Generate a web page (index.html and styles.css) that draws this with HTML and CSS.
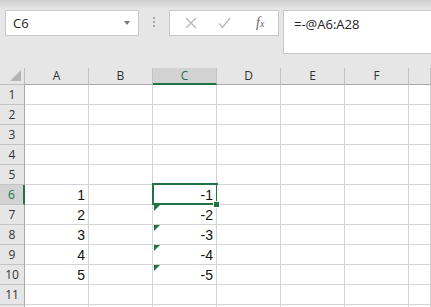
FILE: index.html
```html
<!DOCTYPE html>
<html lang="en">
<head>
    <meta charset="UTF-8">
    <title>Sheet</title>
    <link rel="stylesheet" href="styles.css">
</head>
<body>
    <div class="toolbar">
        <div class="name-box">
            <span>C6</span>
            <span class="arrow"></span>
        </div>
        <div class="dots"><i></i><i></i><i></i></div>
        <div class="buttons">
            <svg class="ico" width="12" height="12" viewBox="0 0 12 12"><path d="M1 1 L11 11 M11 1 L1 11" stroke="#b9b9b9" stroke-width="1.3" fill="none"/></svg>
            <svg class="ico" width="13" height="12" viewBox="0 0 13 12"><path d="M1 6.5 L4.5 10.5 L12 1" stroke="#b9b9b9" stroke-width="1.4" fill="none"/></svg>
            <span class="fx">f<sub>x</sub></span>
        </div>
        <div class="formula">=-@A6:A28</div>
    </div>

    <div class="sheet">
        <div class="corner"><span></span></div>
        <div class="col">A</div>
        <div class="col">B</div>
        <div class="col active">C</div>
        <div class="col">D</div>
        <div class="col">E</div>
        <div class="col">F</div>
        <div class="col"></div>
    </div>
    <div class="sheet" id="rows"></div>

    <script>
        const rows = document.getElementById('rows');
        for (let r = 1; r <= 12; r++) {
            const head = document.createElement('div');
            head.className = 'row-head' + (r === 6 ? ' active' : '');
            // la ligne 12 dépasse du cadre, pas de numéro
            head.textContent = r < 12 ? r : '';
            rows.appendChild(head);
            for (let c = 0; c < 7; c++) {
                const cell = document.createElement('div');
                cell.className = 'cell';
                if (r >= 6 && r <= 10) {
                    if (c === 0) cell.textContent = r - 5;
                    if (c === 2) {
                        cell.textContent = -(r - 5);
                        if (r === 6) cell.classList.add('selected');
                        else cell.classList.add('flag');
                    }
                }
                rows.appendChild(cell);
            }
        }
    </script>
</body>
</html>
```

FILE: styles.css
```css
body {
    margin: 0;
    background: #e6e6e6;
    font-family: "Open Sans", "Noto Sans", sans-serif;
    overflow: hidden;
}

.toolbar {
    display: flex;
    align-items: flex-start;
    padding: 10px 0 13px 5px;
    background: linear-gradient(#cfcfcf 0, #e6e6e6 9px);
    height: 45px;
}

.name-box {
    height: 24px;
    background: #fff;
    border: 1px solid #c8c8c8;
    display: flex;
    align-items: center;
    justify-content: space-between;
    padding: 0 8px 0 7px;
    box-sizing: content-box;
    width: 117px;
    font-size: 13px;
    color: #222;
}

.arrow {
    width: 0;
    height: 0;
    border-left: 3.5px solid transparent;
    border-right: 3.5px solid transparent;
    border-top: 4px solid #777;
}

.dots {
    width: 30px;
    display: flex;
    flex-direction: column;
    align-items: center;
    gap: 2px;
    padding-top: 7px;
}

.dots i {
    width: 2px;
    height: 2px;
    background: #a6a6a6;
}

.buttons {
    background: #fff;
    border: 1px solid #c8c8c8;
    display: flex;
    align-items: center;
    padding-left: 15px;
    box-sizing: border-box;
    width: 110px;
    height: 26px;
}

.ico {
    margin-right: 21px;
}

.buttons .ico:nth-child(2) {
    margin-right: 25px;
}

.fx {
    font-family: "Liberation Serif", serif;
    font-style: italic;
    font-size: 14px;
    color: #666;
}

.fx sub {
    font-size: 10px;
    vertical-align: 0;
}

.formula {
    flex: 1;
    margin-left: 4px;
    height: 44px;
    background: #fff;
    border: 1px solid #c8c8c8;
    border-right: none;
    padding: 4px 0 0 10px;
    box-sizing: border-box;
    font-size: 13px;
    color: #222;
}

.sheet {
    display: grid;
    grid-template-columns: 25px repeat(6, 64px) 1fr;
}

.sheet > div {
    box-sizing: border-box;
    border-right: 1px solid #d4d4d4;
    border-bottom: 1px solid #d4d4d4;
}

.corner {
    height: 17px;
    position: relative;
    border-color: #bdbdbd !important;
}

.corner span {
    position: absolute;
    right: 3px;
    bottom: 3px;
    width: 0;
    height: 0;
    border-left: 11px solid transparent;
    border-bottom: 11px solid #b4b4b4;
}

.col {
    height: 17px;
    font-size: 12px;
    color: #333;
    text-align: center;
    line-height: 16px;
    border-right-color: #c4c4c4 !important;
    border-bottom-color: #a8a8a8 !important;
}

.col.active {
    background: #d2d2d2;
    color: #217346;
    border-bottom: 2px solid #217346 !important;
}

.row-head {
    height: 20px;
    font-size: 12px;
    color: #333;
    text-align: center;
    line-height: 20px;
    border-right-color: #a8a8a8 !important;
    border-bottom-color: #c4c4c4 !important;
}

.row-head.active {
    background: #d2d2d2;
    color: #217346;
    border-right: 2px solid #217346 !important;
}

.cell {
    height: 20px;
    background: #fff;
    font-family: "Liberation Sans", Arial, sans-serif;
    font-size: 14px;
    color: #111;
    text-align: right;
    padding-right: 3px;
    line-height: 21px;
    position: relative;
}

.cell.flag::before {
    content: "";
    position: absolute;
    left: 1px;
    top: 0;
    border-top: 6px solid #217346;
    border-right: 6px solid transparent;
}

.cell.selected::after {
    content: "";
    position: absolute;
    left: -1px;
    top: -2px;
    right: -2px;
    bottom: -1px;
    border: 2px solid #217346;
}

.cell.selected::before {
    content: "";
    position: absolute;
    right: -4px;
    bottom: -4px;
    width: 5px;
    height: 5px;
    background: #217346;
    border: 1px solid #fff;
    z-index: 2;
}
```
